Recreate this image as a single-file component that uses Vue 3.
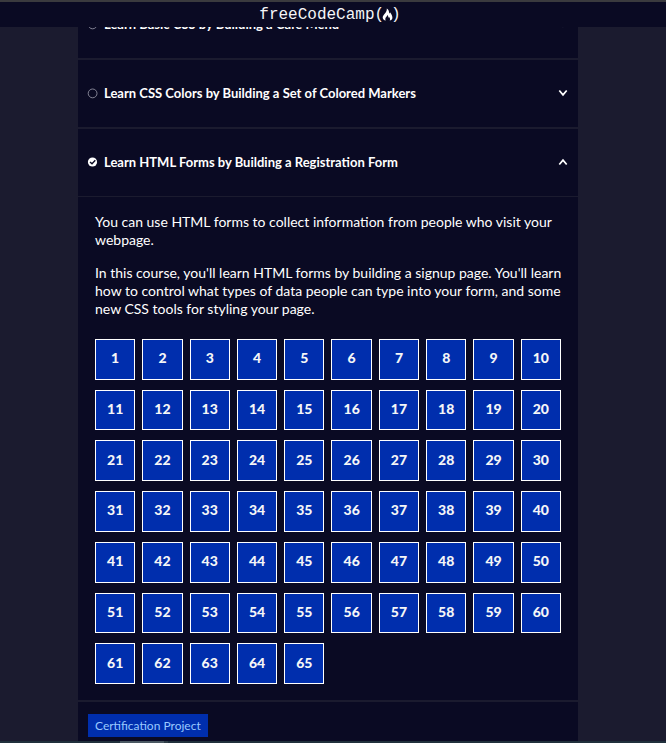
<script setup>
import { ref } from 'vue'

const blocks = ref([
  { title: 'Learn Basic CSS by Building a Cafe Menu', done: false, open: false, steps: 0, intro: [] },
  { title: 'Learn CSS Colors by Building a Set of Colored Markers', done: false, open: false, steps: 0, intro: [] },
  {
    title: 'Learn HTML Forms by Building a Registration Form',
    done: true,
    open: true,
    steps: 65,
    intro: [
      'You can use HTML forms to collect information from people who visit your webpage.',
      "In this course, you'll learn HTML forms by building a signup page. You'll learn how to control what types of data people can type into your form, and some new CSS tools for styling your page."
    ]
  }
])
</script>

<template>
  <div class="page">
    <header class="topbar">
      <a class="brand" href="#">
        <span>freeCodeCamp(</span>
        <svg class="flame" viewBox="0 0 11 13" aria-hidden="true">
          <path d="M4.800.5C6.800 1.800 7.200 3.800 7.200 5.400 7.800 5.200 8 4.700 8 4.200 9.600 6.200 10.600 8.200 10.400 10 10.200 11.400 9.200 12.300 7.700 12.500 8.300 11.200 8.100 9.900 7 8.900 6.900 9.500 6.600 9.500 6.300 9.200 6.400 8.300 6 7.600 5.300 7 5.200 8.500 3.300 9.300 3.300 10.900 3.300 11.600 3.500 12.200 3.900 12.500 1.800 12.200.7 11 .7 9.400.7 6.800 5.300 4.800 4.800.5Z" />
        </svg>
        <span>)</span>
      </a>
    </header>

    <main class="viewport">
      <div class="course">
        <section v-for="block in blocks" :key="block.title" class="block">
          <button class="block-head" type="button" :aria-expanded="block.open" @click="block.open = !block.open">
            <svg class="status" viewBox="0 0 10 10" aria-hidden="true">
              <template v-if="block.done">
                <circle class="disc" cx="4.500" cy="5" r="4.600" />
                <path class="tick" d="M2 5 4 6.800 7.300 3.300" />
              </template>
              <circle v-else class="ring" cx="4.600" cy="5.400" r="4.400" />
            </svg>
            <span class="title">{{ block.title }}</span>
            <svg class="chevron" :class="{ up: block.open }" viewBox="0 0 10 8" aria-hidden="true">
              <path d="M1.300 1.500 5 5.900 8.700 1.500" />
            </svg>
          </button>
          <div v-if="block.open && block.steps" class="block-body">
            <p v-for="text in block.intro" :key="text">{{ text }}</p>
            <nav class="steps" aria-label="Steps">
              <a v-for="n in block.steps" :key="n" class="step" href="#">{{ n }}</a>
            </nav>
          </div>
        </section>
        <section class="block project">
          <span class="tag">Certification Project</span>
        </section>
      </div>
    </main>
    <div class="dock"><span class="dock-item"></span><span class="dock-edge"></span></div>
  </div>
</template>

<style>
body {
  margin: 0;
  background: #1b1b2f;
}
</style>

<style scoped>
.page {
  display: flex;
  flex-direction: column;
  height: 100vh;
  overflow: hidden;
  box-sizing: border-box;
  color: #ffffff;
  background: #1b1b2f;
  font-family: Lato, sans-serif;
  font-size: 14px;
}
.topbar {
  flex: none;
  display: flex;
  justify-content: center;
  height: 25px;
  border-top: 2px solid #3a3a3e;
  background: #0a0a23;
}
.brand {
  display: flex;
  align-items: center;
  padding-right: 6px;
  color: #f5f6f7;
  font-family: "Liberation Mono", monospace;
  font-size: 16px;
  line-height: 24px;
  text-decoration: none;
}
.flame {
  width: 11px;
  height: 13px;
  margin: 0 -2px;
  fill: #ffffff;
}
.viewport {
  flex: 1;
  min-height: 0;
  overflow: hidden;
  padding: 0 88px 0 78px;
}
.course {
  display: flex;
  flex-direction: column;
  min-height: 100%;
  margin-top: -36px;
}
.block {
  background: #0a0a23;
  border-bottom: 2px solid #1b1b2f;
}
.block-head {
  display: flex;
  align-items: center;
  width: 100%;
  height: 67px;
  padding: 0 10px 2px;
  border: 0;
  background: transparent;
  color: inherit;
  font: inherit;
  font-size: 13px;
  font-weight: 700;
  text-align: left;
  cursor: pointer;
}
.status {
  flex: none;
  width: 10px;
  height: 10px;
  margin-right: 6px;
  overflow: visible;
}
.ring {
  fill: none;
  stroke: #a0a0ae;
  stroke-width: 0.8;
}
.disc {
  fill: #ffffff;
}
.tick {
  fill: none;
  stroke: #0a0a23;
  stroke-width: 1.400;
}
.title {
  flex: 1;
}
.chevron {
  flex: none;
  width: 10px;
  height: 8px;
  fill: none;
  stroke: #ffffff;
  stroke-width: 1.700;
}
.chevron.up {
  transform: rotate(180deg);
}
.block-body {
  padding: 16px 17px;
  border-top: 1px solid #1b1b2f;
}
.block-body p {
  margin: 0 -12px 15px 0;
  line-height: 18px;
}
.block-body p:first-child {
  margin-right: 0;
}
.steps {
  display: grid;
  grid-template-columns: repeat(10, 1fr);
  grid-auto-rows: 1fr;
  gap: 10px 7px;
  min-height: 345px;
  margin-top: 21px;
}
.step {
  display: flex;
  align-items: center;
  justify-content: center;
  padding-bottom: 3px;
  border: 1px solid #ffffff;
  background: #002ead;
  color: #f5f6f7;
  font-weight: 900;
  text-decoration: none;
}
.project {
  flex: 1;
  padding: 12px 10px;
  border-bottom: 0;
}
.tag {
  display: inline-block;
  padding: 0 7px;
  background: #002ead;
  color: #99c9ff;
  font-size: 12px;
  line-height: 23px;
}
.dock {
  flex: none;
  display: flex;
  height: 2px;
  padding-left: 120px;
  background: #20303c;
}
.dock-item {
  width: 44px;
  background: #4a5862;
}
.dock-edge {
  width: 4px;
  background: #303e48;
}
</style>
